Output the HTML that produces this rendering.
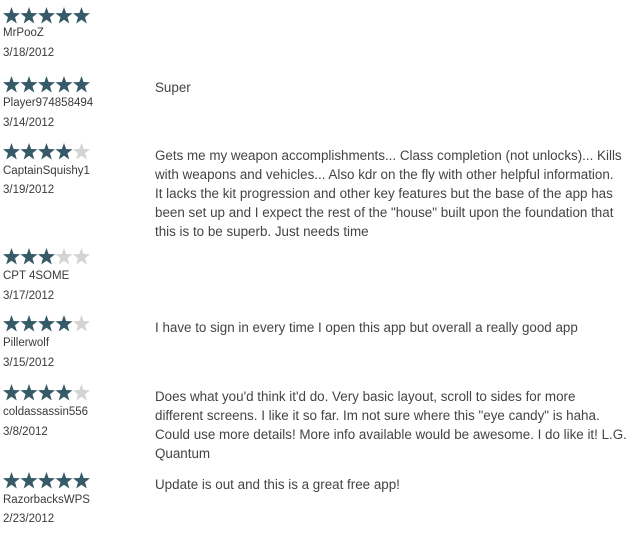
<!DOCTYPE html>
<html><head><meta charset="utf-8"><style>
body{margin:0;width:641px;height:533px;background:#fff;font-family:"Segoe UI","Liberation Sans",sans-serif;color:#3a3a3a;position:relative;overflow:hidden}
.r{position:absolute;left:3px}
.s{display:block;height:17px}
.n{position:absolute;left:3px;font-size:11.5px;white-space:nowrap}
.t{position:absolute;left:155px;font-size:13.4px;line-height:19px;color:#444;white-space:nowrap}
</style></head><body>
<svg width="0" height="0" style="position:absolute"><defs><polygon id="st" points="8.5,0 10.6,6 17,6.2 12,10.2 13.8,16.5 8.5,12.8 3.2,16.5 5,10.2 0,6.2 6.4,6"/></defs></svg>
<div class="r" style="top:7px"><svg class="s" width="90" height="17"><g fill="#365a68"><use href="#st"/><use href="#st" x="17.5"/><use href="#st" x="35"/><use href="#st" x="52.5"/><use href="#st" x="70"/></g></svg></div>
<div class="n" style="top:27px">MrPooZ</div><div class="n" style="top:47px">3/18/2012</div>

<div class="r" style="top:76px"><svg class="s" width="90" height="17"><g fill="#365a68"><use href="#st"/><use href="#st" x="17.5"/><use href="#st" x="35"/><use href="#st" x="52.5"/><use href="#st" x="70"/></g></svg></div>
<div class="n" style="top:97px">Player974858494</div><div class="n" style="top:117px">3/14/2012</div>
<div class="t" style="top:78px">Super</div>

<div class="r" style="top:143px"><svg class="s" width="90" height="17"><g fill="#365a68"><use href="#st"/><use href="#st" x="17.5"/><use href="#st" x="35"/><use href="#st" x="52.5"/></g><use href="#st" x="70" fill="#d4d4d4"/></svg></div>
<div class="n" style="top:165px">CaptainSquishy1</div><div class="n" style="top:184px">3/19/2012</div>
<div class="t" style="top:146px">Gets me my weapon accomplishments... Class completion (not unlocks)... Kills<br>with weapons and vehicles... Also kdr on the fly with other helpful information.<br>It lacks the kit progression and other key features but the base of the app has<br>been set up and I expect the rest of the "house" built upon the foundation that<br>this is to be superb. Just needs time</div>

<div class="r" style="top:248px"><svg class="s" width="90" height="17"><g fill="#365a68"><use href="#st"/><use href="#st" x="17.5"/><use href="#st" x="35"/></g><g fill="#d4d4d4"><use href="#st" x="52.5"/><use href="#st" x="70"/></g></svg></div>
<div class="n" style="top:270px">CPT 4SOME</div><div class="n" style="top:290px">3/17/2012</div>

<div class="r" style="top:315px"><svg class="s" width="90" height="17"><g fill="#365a68"><use href="#st"/><use href="#st" x="17.5"/><use href="#st" x="35"/><use href="#st" x="52.5"/></g><use href="#st" x="70" fill="#d4d4d4"/></svg></div>
<div class="n" style="top:337px">Pillerwolf</div><div class="n" style="top:357px">3/15/2012</div>
<div class="t" style="top:318px">I have to sign in every time I open this app but overall a really good app</div>

<div class="r" style="top:384px"><svg class="s" width="90" height="17"><g fill="#365a68"><use href="#st"/><use href="#st" x="17.5"/><use href="#st" x="35"/><use href="#st" x="52.5"/></g><use href="#st" x="70" fill="#d4d4d4"/></svg></div>
<div class="n" style="top:406px">coldassassin556</div><div class="n" style="top:426px">3/8/2012</div>
<div class="t" style="top:387px">Does what you'd think it'd do. Very basic layout, scroll to sides for more<br>different screens. I like it so far. Im not sure where this "eye candy" is haha.<br>Could use more details! More info available would be awesome. I do like it! L.G.<br>Quantum</div>

<div class="r" style="top:472px"><svg class="s" width="90" height="17"><g fill="#365a68"><use href="#st"/><use href="#st" x="17.5"/><use href="#st" x="35"/><use href="#st" x="52.5"/><use href="#st" x="70"/></g></svg></div>
<div class="n" style="top:494px">RazorbacksWPS</div><div class="n" style="top:513px">2/23/2012</div>
<div class="t" style="top:475px">Update is out and this is a great free app!</div>
</body></html>
